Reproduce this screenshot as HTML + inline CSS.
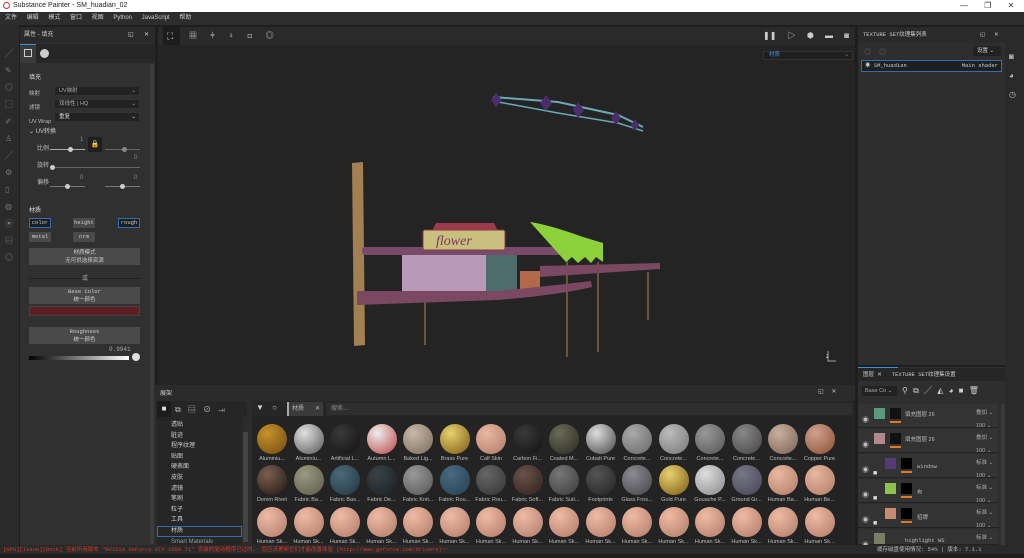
<!DOCTYPE html>
<html><head><meta charset="utf-8"><style>
*{margin:0;padding:0;box-sizing:border-box}
body{width:1024px;height:554px;overflow:hidden;background:#1e1e1e;font-family:"Liberation Sans","Noto Sans CJK SC",sans-serif;font-size:6px;color:#bbb;position:relative}
.a{position:absolute}
.mono{font-family:"Liberation Mono","Noto Sans CJK SC",monospace}
.sp{position:absolute;width:30px;height:30px;border-radius:50%}
.lb{position:absolute;width:36px;text-align:center;font-size:5.5px;color:#bbb;white-space:nowrap;overflow:hidden}
.dd{position:absolute;left:54px;width:86px;height:10px;background:#222;border:1px solid #333;color:#aaa;font-size:5.5px;padding-left:4px;line-height:8px}
.btn{position:absolute;background:#4a4a4a;color:#ccc;text-align:center;font-size:5.5px}
.layer{position:absolute;left:858px;width:140px;height:24px;background:#333;border-bottom:1px solid #222}
</style></head><body>
<div class="a" style="left:0;top:0;width:1024px;height:12px;background:#fff;color:#222;font-size:7px;line-height:12px;padding-left:13px">Substance Painter - SM_huadian_02</div>
<div class="a" style="left:3px;top:2px;width:7px;height:7px;border:1.5px solid #d33;border-radius:50%"></div>
<div class="a" style="left:960px;top:0;font-size:8px;color:#333;line-height:12px;word-spacing:14px">—&nbsp;❐&nbsp;✕</div>
<div class="a" style="left:0;top:12px;width:1024px;height:13px;background:#2d2d2d;color:#ccc;font-size:6px;line-height:13px;padding-left:5px;word-spacing:8px">文件 编辑 模式 窗口 视图 Python JavaScript 帮助</div>
<div class="a" style="left:0;top:25px;width:19px;height:520px;background:#2a2a2a"></div>
<div class="a" style="left:5px;top:45px;color:#777;font-size:8px;line-height:17px;width:12px">╱<br>✎<br>◎<br>▢<br>✐<br>♙<br>╱<br>⚙<br>▯<br>◍<br>▣<br>▤<br>◎</div>
<div class="a" style="left:20px;top:27px;width:135px;height:518px;background:#303030"></div>
<div class="a" style="left:20px;top:27px;width:135px;height:16px;background:#2a2a2a;color:#ccc;font-size:6px;line-height:16px;padding-left:4px">属性 - 填充<span style="position:absolute;left:108px">◱</span><span style="position:absolute;left:124px">✕</span></div>
<div class="a" style="left:20px;top:44px;width:135px;height:19px;background:#262626"></div>
<div class="a" style="left:20px;top:44px;width:16px;height:19px;background:#3a3a3a;border-top:1px solid #3a8ee6"></div>
<div class="a" style="left:24px;top:49px;width:8px;height:8px;border:1px solid #ccc"></div>
<div class="a" style="left:40px;top:49px;width:9px;height:9px;border-radius:50%;background:#ccc"></div>
<div class="a" style="left:150px;top:64px;width:4px;height:480px;background:#3c3c3c"></div>
<div class="a" style="left:29px;top:72px;color:#ddd;font-size:6px">填充</div>
<div class="a" style="left:29px;top:87px;font-size:5.5px;line-height:14px">映射<br>滤镜<br>UV Wrap</div>
<div class="dd" style="top:86px">UV映射<span style="float:right;padding-right:3px">⌄</span></div>
<div class="dd" style="top:99px">双线性 | HQ<span style="float:right;padding-right:3px">⌄</span></div>
<div class="dd" style="top:112px;color:#ddd">重复<span style="float:right;padding-right:3px">⌄</span></div>
<div class="a" style="left:29px;top:126px;color:#ccc">⌄ UV转换</div>
<div class="a" style="left:37px;top:141px;line-height:17px">比例<br>旋转<br>偏移</div>
<div class="a" style="left:88px;top:137px;width:14px;height:15px;background:#1e1e1e;color:#ccc;text-align:center;line-height:15px;font-size:7px">🔒</div>
<div class="a" style="left:50px;top:149px;width:35px;height:1px;background:#aaa"></div><div class="a" style="left:68px;top:147px;width:5px;height:5px;border-radius:50%;background:#ccc"></div>
<div class="a" style="left:105px;top:149px;width:35px;height:1px;background:#666"></div><div class="a" style="left:122px;top:147px;width:5px;height:5px;border-radius:50%;background:#888"></div>
<div class="a" style="left:50px;top:167px;width:90px;height:1px;background:#666"></div><div class="a" style="left:50px;top:165px;width:5px;height:5px;border-radius:50%;background:#ccc"></div>
<div class="a" style="left:50px;top:186px;width:35px;height:1px;background:#777"></div><div class="a" style="left:65px;top:184px;width:5px;height:5px;border-radius:50%;background:#ccc"></div>
<div class="a" style="left:105px;top:186px;width:35px;height:1px;background:#777"></div><div class="a" style="left:120px;top:184px;width:5px;height:5px;border-radius:50%;background:#ccc"></div>
<div class="a" style="left:80px;top:137px;color:#888">1</div><div class="a" style="left:134px;top:155px;color:#888">0</div><div class="a" style="left:80px;top:175px;color:#888">0</div><div class="a" style="left:134px;top:175px;color:#888">0</div>
<div class="a" style="left:29px;top:205px;color:#ddd">材质</div>
<div class="btn mono" style="left:29px;top:218px;width:22px;height:10px;background:#1e1e1e;border:1px solid #2e6fb5;line-height:8px">color</div>
<div class="btn mono" style="left:73px;top:218px;width:22px;height:10px;line-height:10px">height</div>
<div class="btn mono" style="left:118px;top:218px;width:22px;height:10px;background:#1e1e1e;border:1px solid #2e6fb5;line-height:8px">rough</div>
<div class="btn mono" style="left:29px;top:232px;width:22px;height:10px;line-height:10px">metal</div>
<div class="btn mono" style="left:73px;top:232px;width:22px;height:10px;line-height:10px">nrm</div>
<div class="btn" style="left:29px;top:248px;width:111px;height:17px;line-height:8px;padding-top:1px">材质模式<br>无可供选择资源</div>
<div class="a" style="left:29px;top:278px;width:111px;height:1px;background:#222"></div>
<div class="a" style="left:82px;top:273px;color:#aaa">或</div>
<div class="btn mono" style="left:29px;top:287px;width:111px;height:17px;line-height:8px;padding-top:1px">Base Color<br>统一颜色</div>
<div class="a" style="left:29px;top:306px;width:111px;height:10px;background:#5c1f22;border:1px solid #444"></div>
<div class="btn mono" style="left:29px;top:327px;width:111px;height:17px;line-height:8px;padding-top:1px">Roughness<br>统一颜色</div>
<div class="a mono" style="left:109px;top:346px;color:#aaa">0.9941</div>
<div class="a" style="left:29px;top:356px;width:100px;height:4px;background:linear-gradient(90deg,#000,#fff)"></div>
<div class="a" style="left:132px;top:353px;width:8px;height:8px;border-radius:50%;background:#ddd"></div>
<div class="a" style="left:158px;top:27px;width:697px;height:18px;background:#2a2a2a"></div>
<div class="a" style="left:163px;top:27px;width:17px;height:18px;background:#1c1c1c"></div>
<div class="a" style="left:167px;top:31px;color:#ddd;font-size:9px;line-height:10px">⛶</div>
<div class="a" style="left:189px;top:30px;color:#ccc;font-size:8px;word-spacing:11px">▦ ⫩ ♀ ⊡ ◎</div>
<div class="a" style="left:763px;top:30px;color:#ccc;font-size:8px;word-spacing:9px">❚❚ ▷ ⬢ ▬ ◙</div>
<div class="a" style="left:158px;top:45px;width:697px;height:340px;background:#242424"></div>
<div class="a" style="left:763px;top:51px;width:90px;height:9px;background:#1f1f1f;border:1px solid #333;color:#3a8ee6;font-size:5.5px;line-height:7px;padding-left:5px">材质<span style="float:right;color:#888;padding-right:3px">⌄</span></div>
<svg class="a" style="left:158px;top:45px" width="697" height="340">
<path d="M335 52 L400 57 L460 70 L485 82" stroke="#6aa9b5" stroke-width="2" fill="none"/>
<path d="M335 56 L400 68 L460 78 L485 86" stroke="#6aa9b5" stroke-width="1.5" fill="none"/>
<g fill="#4b2d6d"><path d="M338 48l6 7-6 7-5-7z"/><path d="M388 50l6 8-6 8-6-8z"/><path d="M420 57l6 8-6 8-5-8z"/><path d="M458 66l5 7-5 7-5-7z"/><path d="M477 74l4 6-4 6-4-6z"/></g>
<g stroke="#6b5535" stroke-width="2"><path d="M267 255v45M409 213v99M440 217v90M490 227v48"/></g>
<path d="M382 221 L502 218 L502 224 L382 232 Z" fill="#7a4860"/>
<path d="M194 118 L205 117 L207 300 L196 301 Z" fill="#a38052"/>
<rect x="204" y="202" width="205" height="8" rx="3" fill="#7a4a6a"/>
<rect x="244" y="210" width="84" height="38" fill="#b89ab8"/>
<rect x="328" y="210" width="31" height="38" fill="#4d6d6d"/>
<path d="M265 270" />
<path d="M362 226 h20 v23 h-20z" fill="#b06a4a"/>
<path d="M199 246 L340 246 Q400 240 433 236 L434 242 Q400 250 340 255 L199 260 Z" fill="#7a4860"/>
<path d="M274 186 L278 178 L336 178 L340 186 Z" fill="#9c3a4e"/>
<rect x="265" y="185" width="82" height="20" rx="2" fill="#c9c080" stroke="#8a3a40"/>
<text x="278" y="200" font-family="Liberation Serif" font-size="14" fill="#7a3a5e" font-style="italic">flower</text>
<path d="M372 177 Q392 180 425 192 L445 198 L445 217 L438 212 L433 218 L427 212 L420 218 L414 212 L408 217 Z" fill="#8cd03a"/>
<text x="668" y="313" font-size="6" fill="#ccc">z</text><path d="M670 306v10h8" stroke="#ccc" fill="none" stroke-width=".7"/>
</svg>
<div class="a" style="left:155px;top:385px;width:700px;height:160px;background:#2b2b2b"></div>
<div class="a" style="left:160px;top:388px;color:#ccc">展架</div>
<div class="a" style="left:818px;top:388px;color:#bbb;word-spacing:6px">◱ ✕</div>
<div class="a" style="left:157px;top:401px;width:90px;height:16px;background:#262626"></div>
<div class="a" style="left:157px;top:401px;width:14px;height:16px;background:#1c1c1c;color:#ddd;font-size:8px;text-align:center;line-height:16px">■</div>
<div class="a" style="left:175px;top:404px;color:#bbb;font-size:8px;word-spacing:5px">⧉ ▤ ⊘ ⇥</div>
<div class="a" style="left:157px;top:417px;width:85px;height:128px;background:#262626"></div>
<div class="a" style="left:243px;top:432px;width:5px;height:110px;background:#444"></div>
<div class="a" style="left:171px;top:420px;font-size:6px;line-height:10.6px;color:#ccc">透贴<br>脏迹<br>程序纹理<br>贴图<br>硬表面<br>皮肤<br>滤镜<br>笔刷<br>粒子<br>工具<br>材质<br><span style="color:#999">Smart Materials</span></div>
<div class="a" style="left:157px;top:526px;width:85px;height:11px;border:1px solid #2e6fb5"></div>
<div class="a" style="left:252px;top:401px;width:603px;height:16px;background:#262626"></div>
<div class="a" style="left:256px;top:403px;color:#ccc;font-size:8px;word-spacing:6px">▼ ○</div>
<div class="a" style="left:287px;top:402px;width:36px;height:14px;background:#3a3a3a;border-left:2px solid #aaa;color:#bbb;line-height:14px;padding-left:3px">材质<span style="position:absolute;left:26px">✕</span></div>
<div class="a" style="left:327px;top:403px;width:525px;height:12px;background:#2e2e2e;color:#888;line-height:12px;padding-left:4px">搜索...</div>
<div class="a" style="left:252px;top:417px;width:603px;height:128px;background:#232323"></div>
<div id="sh"></div>
<div class="a" style="left:858px;top:27px;width:147px;height:338px;background:#2e2e2e"></div>
<div class="a mono" style="left:858px;top:27px;width:147px;height:16px;background:#2a2a2a;color:#ccc;font-size:5.5px;line-height:16px;padding-left:5px">TEXTURE SET纹理集列表<span style="position:absolute;left:122px">◱</span><span style="position:absolute;left:136px">✕</span></div>
<div class="a" style="left:864px;top:47px;color:#666;font-size:7px;word-spacing:6px">◎ ◎</div>
<div class="a" style="left:973px;top:46px;width:28px;height:10px;background:#222;color:#ccc;font-size:5.5px;line-height:10px;padding-left:4px">设置 ⌄</div>
<div class="a mono" style="left:861px;top:60px;width:141px;height:12px;background:#1f1f1f;border:1px solid #2e6fb5;color:#ccc;font-size:5.5px;line-height:10px;padding-left:3px">◉ SM_huadian<span style="float:right;padding-right:3px">Main shader</span></div>
<div class="a" style="left:1005px;top:27px;width:19px;height:518px;background:#2a2a2a"></div>
<div class="a" style="left:1009px;top:47px;color:#bbb;font-size:8px;line-height:19px">◙<br>◕<br>◷</div>
<div class="a" style="left:858px;top:367px;width:147px;height:178px;background:#2e2e2e"></div>
<div class="a" style="left:858px;top:367px;width:40px;height:1px;background:#3a8ee6"></div>
<div class="a mono" style="left:858px;top:368px;width:147px;height:13px;background:#262626;color:#ccc;font-size:5.5px;line-height:13px;padding-left:5px">图层 ✕ &nbsp;&nbsp;TEXTURE SET纹理集设置</div>
<div class="a" style="left:862px;top:386px;width:35px;height:10px;background:#222;color:#aaa;font-size:5.5px;line-height:10px;padding-left:3px">Base Co ⌄</div>
<div class="a" style="left:902px;top:385px;color:#ccc;font-size:8px;word-spacing:3px">⚲ ⧉ ╱ ◭ ◕ ■ 🗑</div>
<div class="layer" style="top:404px"></div><div class="layer" style="top:429px"></div><div class="layer" style="top:454px"></div><div class="layer" style="top:479px"></div><div class="layer" style="top:504px"></div><div class="layer" style="top:529px;height:16px"></div>
<div class="a" style="left:1001px;top:404px;width:4px;height:141px;background:#3a3a3a"></div>
<div class="a" style="left:862px;top:408px;color:#bbb;font-size:7px;line-height:25px">◉<br>◉<br>◉<br>◉<br>◉<br>◉</div>
<div class="a" style="left:873px;top:461px;color:#ddd;font-size:7px;line-height:25px">■<br>■<br>■</div>
<div class="a" style="left:874px;top:408px;width:11px;height:11px;background:#5a9a7a"></div>
<div class="a" style="left:874px;top:433px;width:11px;height:11px;background:#b08a8a"></div>
<div class="a" style="left:885px;top:458px;width:11px;height:11px;background:#553a78"></div>
<div class="a" style="left:885px;top:483px;width:11px;height:11px;background:#8cc34a"></div>
<div class="a" style="left:885px;top:508px;width:11px;height:11px;background:#c98a70"></div>
<div class="a" style="left:874px;top:533px;width:11px;height:11px;background:#7a7e66"></div>
<div class="a" style="left:890px;top:408px;width:11px;height:11px;background:#111"></div>
<div class="a" style="left:890px;top:433px;width:11px;height:11px;background:#111"></div>
<div class="a" style="left:901px;top:458px;width:11px;height:11px;background:#000"></div>
<div class="a" style="left:901px;top:483px;width:11px;height:11px;background:#000"></div>
<div class="a" style="left:901px;top:508px;width:11px;height:11px;background:#000"></div>
<div class="a" style="left:890px;top:421px;width:11px;height:2px;background:#e07a1a"></div>
<div class="a" style="left:890px;top:446px;width:11px;height:2px;background:#e07a1a"></div>
<div class="a" style="left:901px;top:471px;width:11px;height:2px;background:#e07a1a"></div>
<div class="a" style="left:901px;top:496px;width:11px;height:2px;background:#e07a1a"></div>
<div class="a" style="left:901px;top:521px;width:11px;height:2px;background:#e07a1a"></div>
<div class="a" style="left:905px;top:410px;color:#bbb;font-size:5.5px">填充图层 26</div>
<div class="a" style="left:905px;top:435px;color:#bbb;font-size:5.5px">填充图层 26</div>
<div class="a mono" style="left:917px;top:463px;color:#bbb;font-size:5.5px">window</div>
<div class="a" style="left:917px;top:488px;color:#bbb;font-size:5.5px">布</div>
<div class="a" style="left:917px;top:513px;color:#bbb;font-size:5.5px">招牌</div>
<div class="a mono" style="left:905px;top:537px;color:#bbb;font-size:5.5px">highlight WS</div>
<div class="a" style="left:976px;top:407px;color:#aaa;font-size:5.5px;line-height:12.5px">叠加 ⌄<br>100 ⌄<br>叠加 ⌄<br>100 ⌄<br>标准 ⌄<br>100 ⌄<br>标准 ⌄<br>100 ⌄<br>标准 ⌄<br>100 ⌄<br>标准 ⌄</div>
<div class="a mono" style="left:0;top:545px;width:1024px;height:9px;background:#2a2a2a;color:#d23a2a;font-size:5.5px;line-height:9px;padding-left:3px;white-space:nowrap">[GPU][Issue][Dock] 当前所用版本 "NVIDIA GeForce GTX 1050 Ti" 安装的驱动程序已过时。 您应该更新它们才能改善体验 (http://www.geforce.com/drivers)~~<span style="position:absolute;left:877px;color:#bbb">缓存磁盘使用情况: 54% | 版本: 7.1.1</span></div>
<script>
var cols=[["#c8922a","#6e4a12"],["#e0e0e0","#555"],["#3a3a3a","#111"],["#eee","#b44"],["#c8b8a8","#7a6a5a"],["#e8d070","#7a5a10"],["#e8b8a0","#b07a66"],["#3a3a3a","#111"],["#6a6a58","#2a2a20"],["#ddd","#444"],["#aaa","#666"],["#bbb","#777"],["#999","#555"],["#888","#444"],["#c8b0a0","#7a6050"],["#d0a090","#8a5030"]],
c2=[["#7a6050","#201510"],["#9a9a80","#5a5a48"],["#4a6a7a","#233540"],["#3a4248","#1a2024"],["#999","#555"],["#4a6a80","#234050"],["#666","#333"],["#6a5248","#30201a"],["#777","#3a3a3a"],["#555","#222"],["#8a8a90","#44444a"],["#e8d070","#7a5a10"],["#ddd","#888"],["#778","#445"],["#e8b8a0","#b07a66"],["#e8b8a0","#b07a66"]],
n1=["Aluminiu...","Aluminiu...","Artificial L...","Autumn L...","Baked Lig...","Brass Pure","Calf Skin","Carbon Fi...","Coated M...","Cobalt Pure","Concrete...","Concrete...","Concrete...","Concrete...","Concrete...","Copper Pure"],
n2=["Denim Rivet","Fabric Ba...","Fabric Bas...","Fabric De...","Fabric Knit...","Fabric Rou...","Fabric Rou...","Fabric Soft...","Fabric Suit...","Footprints","Glass Fros...","Gold Pure","Gouache P...","Ground Gr...","Human Ba...","Human Be..."],h="";
for(var i=0;i<16;i++){var x=257+i*36.5;
h+='<div class="sp" style="left:'+x+'px;top:424px;background:radial-gradient(circle at 35% 30%,'+cols[i][0]+','+cols[i][1]+')"></div><div class="lb" style="left:'+(x-3)+'px;top:456px">'+n1[i]+'</div>';
h+='<div class="sp" style="left:'+x+'px;top:465px;background:radial-gradient(circle at 35% 30%,'+c2[i][0]+','+c2[i][1]+')"></div><div class="lb" style="left:'+(x-3)+'px;top:497px">'+n2[i]+'</div>';
h+='<div class="sp" style="left:'+x+'px;top:507px;background:radial-gradient(circle at 35% 30%,#eebba5,#b07a66)"></div><div class="lb" style="left:'+(x-3)+'px;top:539px">Human Sk...</div>';}
document.getElementById("sh").innerHTML=h;
</script>
</body></html>
